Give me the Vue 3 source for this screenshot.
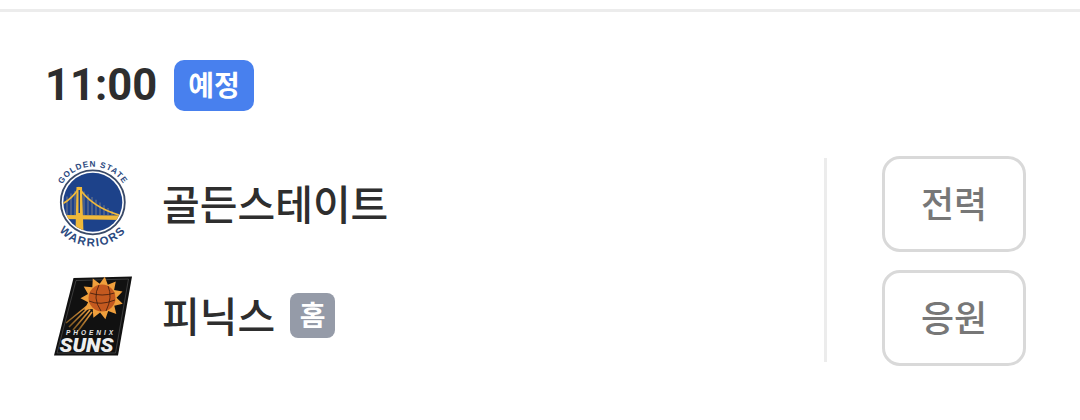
<script setup>
const starPoints = (() => {
  const pts = []
  const n = 11
  for (let i = 0; i < n * 2; i++) {
    const r = i % 2 === 0 ? 21.5 : 14.5
    const a = (Math.PI * i) / n - 0.3
    pts.push(`${(62 + r * Math.cos(a)).toFixed(1)},${(32 + r * Math.sin(a)).toFixed(1)}`)
  }
  return pts.join(' ')
})()

// bridge hangers run from the deck up to the cable
const hangers = [27, 31, 35, 44, 48, 52, 56, 60, 64, 68, 72].map((x) => ({
  x,
  top: x < 39 ? 39 + (39 - x) * 0.7 : 39 + (x - 39) * 0.692
}))

const streaks = [
  'M47 40 L26 57',
  'M48 42 L29 61',
  'M50 44 L33 64',
  'M52 46 L38 65'
]
</script>

<template>
  <div class="page">
    <div class="top-line"></div>
    <section class="game">
      <header class="game-head">
        <span class="time">11:00</span>
        <span class="status">예정</span>
      </header>

      <div class="game-body">
        <div class="teams">
          <div class="team">
            <svg class="logo" viewBox="10 5 90 100">
              <defs>
                <path id="gs-top" d="M19.4 41.2 A35.5 35.5 0 0 1 86.2 41.2" />
                <path id="gs-bottom" d="M9.5 58 A43.5 43.5 0 0 0 96.1 58" />
                <clipPath id="gs-disc"><circle cx="52.8" cy="53.3" r="29.5" /></clipPath>
              </defs>
              <text class="gs-small"><textPath href="#gs-top" startOffset="50%" text-anchor="middle">GOLDEN STATE</textPath></text>
              <circle cx="52.8" cy="53.3" r="32" fill="#fff" stroke="#3a4a68" stroke-width="1.8" />
              <circle cx="52.8" cy="53.3" r="29.5" fill="#1d428a" />
              <g clip-path="url(#gs-disc)">
                <line v-for="h in hangers" :key="h.x" :x1="h.x" :y1="h.top" :x2="h.x" y2="66" stroke="#69748c" stroke-width="1.2" />
                <path d="M22 55 Q32 50 39 39 Q52 58 79 66" fill="none" stroke="#f0b93a" stroke-width="1.6" />
                <path d="M22 66 L82 66.5 L82 71 L22 70 Z" fill="#f0b93a" />
                <path d="M36.5 38 L42 38 L43.5 84 L35.5 84 Z" fill="#f0b93a" />
                <path d="M38.5 41 H40 V64 H38.5 Z" fill="#1d428a" />
              </g>
              <text class="gs-big"><textPath href="#gs-bottom" startOffset="50%" text-anchor="middle">WARRIORS</textPath></text>
            </svg>
            <span class="team-name">골든스테이트</span>
          </div>

          <div class="team">
            <svg class="logo" viewBox="10 0 90 100">
              <defs>
                <linearGradient id="sun-fade" x1="1" y1="0" x2="0" y2="1">
                  <stop offset="0" stop-color="#f0a040" />
                  <stop offset="1" stop-color="#7a5520" />
                </linearGradient>
              </defs>
              <path d="M33.5 12 L92 10.5 L78 89.5 L14 89.5 Z" fill="#111" />
              <path d="M36 14.5 L88.5 13 L75.5 87 L17 87 Z" fill="none" stroke="#5a5a5a" stroke-width="0.6" />
              <path v-for="d in streaks" :key="d" :d="d" stroke="url(#sun-fade)" stroke-width="1.6" fill="none" />
              <polygon :points="starPoints" fill="#ef9f3c" />
              <circle cx="62" cy="32" r="13.5" fill="#c4591f" />
              <path d="M50 27 Q62 31 74.5 27 M49 35 Q60 40 75 34 M59 19 Q52 32 61 45 M68 20 Q73 31 66 45" fill="none" stroke="#3b1a0c" stroke-width="0.8" />
              <text class="sun-small" x="26" y="68.5" textLength="47" lengthAdjust="spacing">PHOENIX</text>
              <text class="sun-big" x="19.5" y="86" textLength="54" lengthAdjust="spacingAndGlyphs">SUNS</text>
            </svg>
            <span class="team-name">피닉스</span>
            <span class="home">홈</span>
          </div>
        </div>

        <div class="actions">
          <button type="button" class="action-btn">전력</button>
          <button type="button" class="action-btn">응원</button>
        </div>
      </div>
    </section>
  </div>
</template>

<style>
html,
body {
  margin: 0;
  background: #fff;
}
</style>

<style scoped>
.page {
  width: 1080px;
  height: 420px;
  overflow: hidden;
  background: #fff;
  font-family: "Noto Sans CJK KR", "Noto Sans", sans-serif;
}

.top-line {
  height: 3px;
  margin-top: 9px;
  background: #ececec;
}

.game {
  padding: 48px 54px 0 45px;
}

.game-head {
  display: flex;
  align-items: center;
  gap: 17px;
  height: 51px;
}

.time {
  font-family: Roboto, "Liberation Sans", sans-serif;
  font-size: 43.5px;
  font-weight: 700;
  color: #2e2e2e;
}

.status {
  width: 80px;
  height: 51px;
  padding-bottom: 2px;
  box-sizing: border-box;
  border-radius: 10px;
  background: #4880ee;
  color: #fff;
  font-size: 28px;
  font-weight: 700;
  line-height: 49px;
  text-align: center;
}

.game-body {
  display: flex;
  margin-top: 45px;
}

.teams {
  flex: 1;
  display: grid;
  grid-auto-rows: 100px;
  row-gap: 12px;
  border-right: 3px solid #ececec;
  height: 204px;
  margin-top: 2px;
  align-content: center;
}

.team {
  display: flex;
  align-items: center;
}

.logo {
  width: 90px;
  height: 100px;
  margin-left: 5px;
  margin-right: 22px;
  flex: none;
}

.gs-small {
  font-family: "Liberation Sans", sans-serif;
  font-size: 8.2px;
  font-weight: 700;
  fill: #2c4a80;
  letter-spacing: 0.9px;
}

.gs-big {
  font-family: "Liberation Sans", sans-serif;
  font-size: 11.5px;
  font-weight: 700;
  fill: #2c4a80;
  letter-spacing: 1.6px;
}

.sun-small {
  font-family: "Liberation Sans", sans-serif;
  font-size: 6.5px;
  font-weight: 700;
  font-style: italic;
  fill: #e6e6e6;
}

.sun-big {
  font-family: Roboto, "Liberation Sans", sans-serif;
  font-size: 20px;
  font-weight: 900;
  font-style: italic;
  fill: #eee;
}

.team-name {
  padding-bottom: 5px;
  font-size: 41px;
  font-weight: 500;
  color: #2e2e2e;
  white-space: nowrap;
}

.home {
  width: 45px;
  height: 45px;
  margin-left: 15px;
  margin-top: -2px;
  border-radius: 8px;
  background: #959ba8;
  color: #fff;
  font-size: 28px;
  font-weight: 700;
  line-height: 43px;
  text-align: center;
}

.actions {
  display: grid;
  grid-auto-rows: 96px;
  row-gap: 18px;
  width: 144px;
  margin-left: 55px;
}

.action-btn {
  box-sizing: border-box;
  padding: 0 0 5px;
  border: 3px solid #d9d9d9;
  border-radius: 18px;
  background: #fff;
  color: #777;
  font-family: inherit;
  font-size: 36px;
  font-weight: 500;
}
</style>
